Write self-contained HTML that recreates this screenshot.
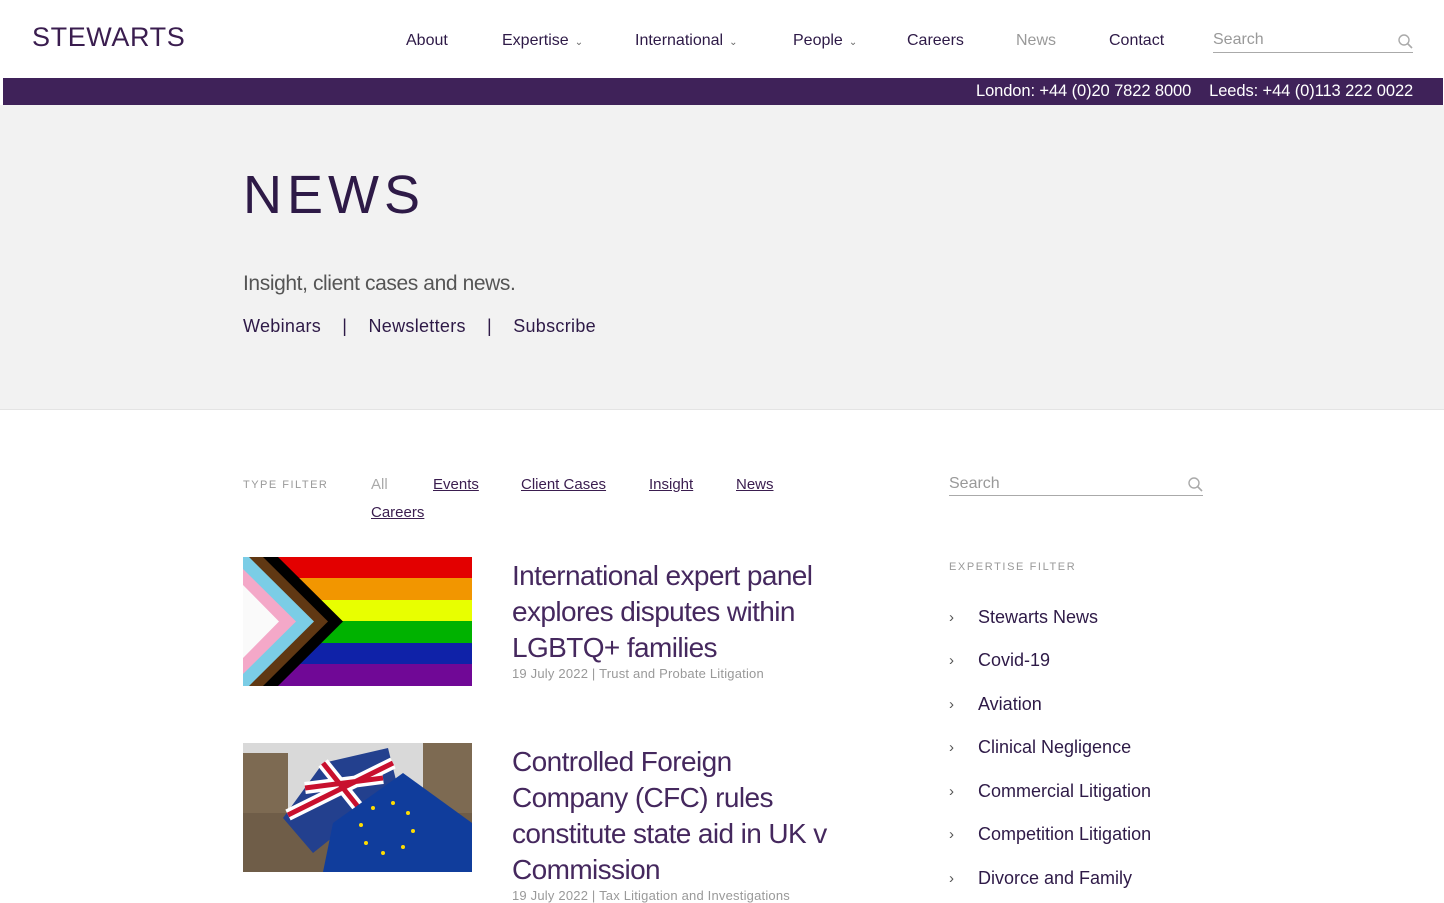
<!DOCTYPE html>
<html><head><meta charset="utf-8"><style>
*{margin:0;padding:0;box-sizing:border-box}
body{width:1444px;height:896px;overflow:hidden;background:#fff;font-family:"Liberation Sans",sans-serif;color:#3a1d4f;position:relative}
.a{position:absolute;white-space:nowrap}
.nav{font-size:16px;top:32px;color:#2e1a47}
.chev{font-size:10px;color:#666;margin-left:6px}
.srch{position:absolute;border-bottom:1px solid #aaa;color:#999;font-size:16px}
.lk{font-size:15px;top:476px;text-decoration:underline;color:#3a1d4f}
.ex{left:949px;font-size:18px;color:#2e1a47}
.ex span{position:absolute;left:0;color:#555;font-size:15px;top:2px}
.ex b{font-weight:normal;margin-left:29px}
h2{font-weight:300;font-size:28px;line-height:36px;color:#45285e;letter-spacing:-0.6px}
.meta{font-size:13px;color:#999;letter-spacing:0.2px}
</style></head><body>
<div class="a" style="left:32px;top:22px;font-size:27px;color:#3a1d4f;letter-spacing:0.6px">STEWARTS</div>
<div class="a nav" style="left:406px">About</div>
<div class="a nav" style="left:502px">Expertise<span class="chev">&#8964;</span></div>
<div class="a nav" style="left:635px">International<span class="chev">&#8964;</span></div>
<div class="a nav" style="left:793px">People<span class="chev">&#8964;</span></div>
<div class="a nav" style="left:907px">Careers</div>
<div class="a nav" style="left:1016px;color:#999">News</div>
<div class="a nav" style="left:1109px">Contact</div>
<div class="srch" style="left:1213px;top:31px;width:200px;height:22px">Search
<svg style="position:absolute;right:0;top:3px" width="15" height="15" viewBox="0 0 15 15"><circle cx="6" cy="6" r="5" fill="none" stroke="#aaa" stroke-width="1.4"/><line x1="9.5" y1="9.5" x2="14" y2="14" stroke="#aaa" stroke-width="1.6"/></svg></div>
<div class="a" style="left:3px;top:78px;width:1440px;height:27px;background:#3f2259"></div>
<div class="a" style="left:976px;top:82px;color:#fff;font-size:16.5px;letter-spacing:-0.1px">London: +44 (0)20 7822 8000&nbsp;&nbsp;&nbsp; Leeds: +44 (0)113 222 0022</div>
<div class="a" style="left:0;top:105px;width:1444px;height:305px;background:#f2f2f2;border-bottom:1px solid #e4e4e4"></div>
<div class="a" style="left:243px;top:164px;font-size:54px;font-weight:300;letter-spacing:5px;color:#2e1a47">NEWS</div>
<div class="a" style="left:243px;top:272px;font-size:21px;color:#555;letter-spacing:-0.4px">Insight, client cases and news.</div>
<div class="a" style="left:243px;top:316px;font-size:18px;color:#2e1a47;letter-spacing:0.3px">Webinars &nbsp;&nbsp;&nbsp;| &nbsp;&nbsp;&nbsp;Newsletters &nbsp;&nbsp;&nbsp;| &nbsp;&nbsp;&nbsp;Subscribe</div>
<div class="a" style="left:243px;top:479px;font-size:11px;letter-spacing:1.5px;color:#999">TYPE FILTER</div>
<div class="a lk" style="left:371px;color:#aaa;text-decoration:none">All</div>
<div class="a lk" style="left:433px">Events</div>
<div class="a lk" style="left:521px">Client Cases</div>
<div class="a lk" style="left:649px">Insight</div>
<div class="a lk" style="left:736px">News</div>
<div class="a lk" style="left:371px;top:504px">Careers</div>
<div class="srch" style="left:949px;top:475px;width:254px;height:21px">Search
<svg style="position:absolute;right:0;top:2px" width="15" height="15" viewBox="0 0 15 15"><circle cx="6" cy="6" r="5" fill="none" stroke="#aaa" stroke-width="1.4"/><line x1="9.5" y1="9.5" x2="14" y2="14" stroke="#aaa" stroke-width="1.6"/></svg></div>
<div class="a" style="left:949px;top:561px;font-size:11px;letter-spacing:1.6px;color:#999">EXPERTISE FILTER</div>
<div class="a ex" style="top:607px"><span>&#8250;</span><b>Stewarts News</b></div>
<div class="a ex" style="top:650px"><span>&#8250;</span><b>Covid-19</b></div>
<div class="a ex" style="top:694px"><span>&#8250;</span><b>Aviation</b></div>
<div class="a ex" style="top:737px"><span>&#8250;</span><b>Clinical Negligence</b></div>
<div class="a ex" style="top:781px"><span>&#8250;</span><b>Commercial Litigation</b></div>
<div class="a ex" style="top:824px"><span>&#8250;</span><b>Competition Litigation</b></div>
<div class="a ex" style="top:868px"><span>&#8250;</span><b>Divorce and Family</b></div>
<svg class="a" style="left:243px;top:557px" width="229" height="129" viewBox="0 0 229 129">
<rect y="0" width="229" height="22" fill="#e30000"/><rect y="21" width="229" height="22" fill="#f29600"/><rect y="43" width="229" height="22" fill="#e8ff00"/><rect y="64" width="229" height="22" fill="#00b200"/><rect y="86" width="229" height="22" fill="#0f22a8"/><rect y="107" width="229" height="22" fill="#700896"/>
<polygon points="0,0 35,0 100,64.5 35,129 0,129" fill="#000"/>
<polygon points="0,0 20,0 85,64.5 20,129 0,129" fill="#603813"/>
<polygon points="0,0 6,0 71,64.5 6,129 0,129" fill="#7bcde6"/>
<polygon points="0,12 53,64.5 0,117" fill="#f4a8c8"/>
<polygon points="0,28 36,64.5 0,101" fill="#fafafa"/>
</svg>
<svg class="a" style="left:243px;top:743px" width="229" height="129" viewBox="0 0 229 129">
<rect width="229" height="129" fill="#d9d9d9"/>
<rect x="0" y="10" width="45" height="119" fill="#7d6a52"/><rect x="180" y="0" width="49" height="129" fill="#7d6a52"/><rect x="0" y="70" width="229" height="59" fill="#6f5d48"/>
<polygon points="40,75 80,20 145,5 155,45 120,70 70,110" fill="#23408e"/>
<path d="M45,72 L150,20 M80,20 L120,70 M62,45 L140,35" stroke="#fff" stroke-width="12"/>
<path d="M45,72 L150,20 M80,20 L120,70 M62,45 L140,35" stroke="#c8102e" stroke-width="5"/>
<polygon points="90,80 160,30 229,80 229,129 80,129" fill="#103d9c"/>
<g fill="#ffdd00"><circle cx="150" cy="60" r="2"/><circle cx="165" cy="70" r="2"/><circle cx="170" cy="88" r="2"/><circle cx="160" cy="104" r="2"/><circle cx="140" cy="110" r="2"/><circle cx="123" cy="100" r="2"/><circle cx="118" cy="82" r="2"/><circle cx="130" cy="65" r="2"/></g>
</svg>
<div class="a" style="left:512px;top:558px;width:330px;white-space:normal"><h2>International expert panel explores disputes within LGBTQ+ families</h2><div class="meta">19 July 2022 | Trust and Probate Litigation</div></div>
<div class="a" style="left:512px;top:744px;width:330px;white-space:normal"><h2>Controlled Foreign Company (CFC) rules constitute state aid in UK v Commission</h2><div class="meta">19 July 2022 | Tax Litigation and Investigations</div></div>
</body></html>
